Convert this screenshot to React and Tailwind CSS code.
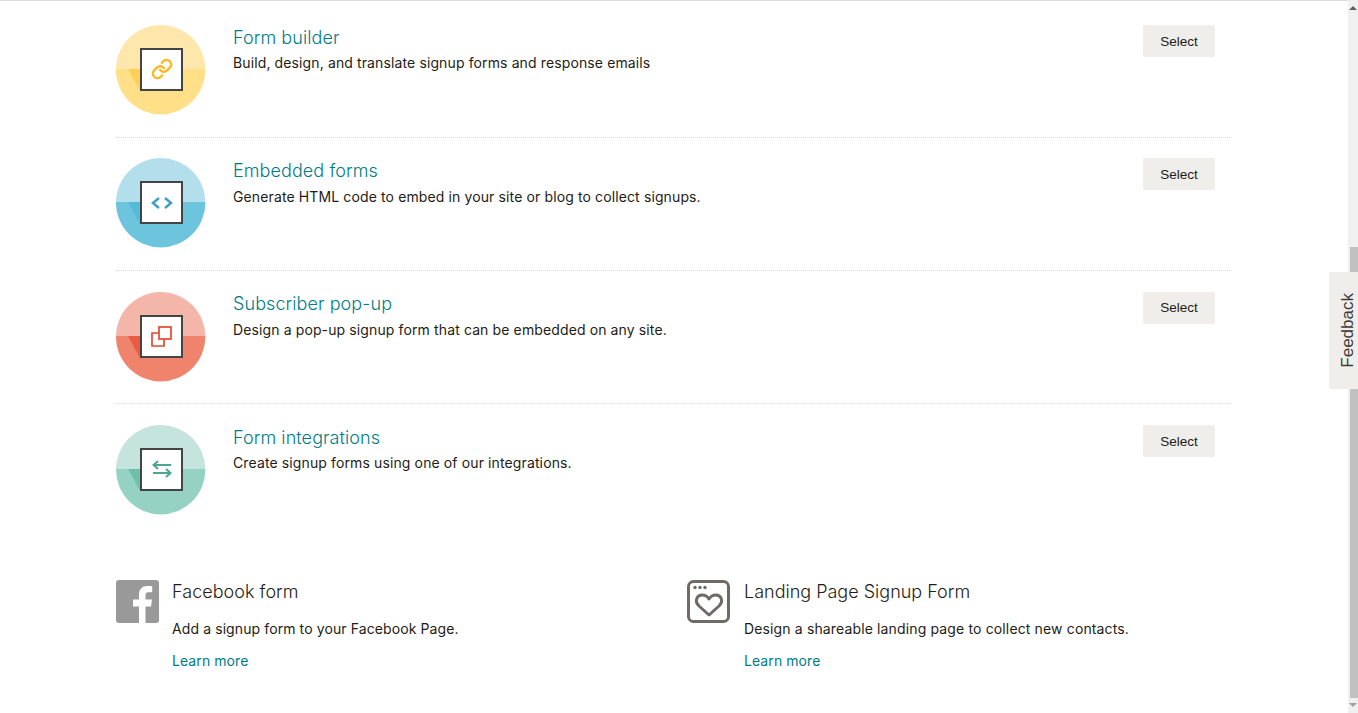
import React from 'react';
import { Link } from 'lucide-react';

const Badge = ({ light, mid, dark, children }) => (
  <div className="relative w-[90px] h-[90px] shrink-0">
    <svg width="90" height="90" viewBox="0 0 90 90" className="block">
      <defs>
        <clipPath id={`c${mid}`}>
          <circle cx="44.7" cy="44.7" r="44.7" />
        </clipPath>
      </defs>
      <g clipPath={`url(#c${mid})`}>
        <rect width="90" height="45" fill={light} />
        <rect y="44" width="90" height="46" fill={mid} />
        <polygon points="12,44 24,44 24,66" fill={dark} />
      </g>
    </svg>
    <div className="absolute left-[24px] top-[23px] w-[43px] h-[43px] bg-white border-2 border-[#444444] flex items-center justify-center">
      {children}
    </div>
  </div>
);

const forms = [
  {
    title: 'Form builder',
    desc: 'Build, design, and translate signup forms and response emails',
    colors: { light: '#ffe6ab', mid: '#ffdf88', dark: '#ffcf56' },
    icon: <Link size={22} strokeWidth={2.6} color="#fbb91f" />,
  },
  {
    title: 'Embedded forms',
    desc: 'Generate HTML code to embed in your site or blog to collect signups.',
    colors: { light: '#b3dfec', mid: '#6dc5dd', dark: '#55bbd6' },
    icon: (
      <svg width="22" height="14" viewBox="0 0 22 14" fill="none" stroke="#3f9fbf" strokeWidth="2.5">
        <path d="M8 2 L2 7 L8 12" />
        <path d="M14 2 L20 7 L14 12" />
      </svg>
    ),
  },
  {
    title: 'Subscriber pop-up',
    desc: 'Design a pop-up signup form that can be embedded on any site.',
    colors: { light: '#f5b6aa', mid: '#f0836c', dark: '#e85c41' },
    icon: (
      <svg width="21" height="21" viewBox="0 0 21 21" fill="none" stroke="#e4492d" strokeWidth="1.7">
        <rect x="8" y="1" width="12" height="12" />
        <path d="M8 7 H1 V20 H13 V13" />
      </svg>
    ),
  },
  {
    title: 'Form integrations',
    desc: 'Create signup forms using one of our integrations.',
    colors: { light: '#c6e4de', mid: '#96d2c4', dark: '#70bfae' },
    icon: (
      <svg width="20" height="18" viewBox="0 0 20 18" fill="none" stroke="#4ea593" strokeWidth="2">
        <path d="M1 5 H19" />
        <path d="M6 1 L1.5 5 L6 9" />
        <path d="M1 13 H19" />
        <path d="M14 9 L18.5 13 L14 17" />
      </svg>
    ),
  },
];

const App = () => {
  return (
    <div className="relative h-[713px] overflow-hidden flex bg-white font-['Inter',sans-serif] text-[#241c15]">
      <main className="flex-1 min-w-0 border-t border-[#dddddd]">
        <div className="ml-[116px] w-[1116px] pt-[3.37px]">
          {forms.map((form, i) => (
            <div
              key={form.title}
              className={`flex pt-[20.63px] pb-[21.7px] ${i < 3 ? 'border-b border-dotted border-[#dcdcdc]' : ''}`}
            >
              <Badge {...form.colors}>{form.icon}</Badge>
              <div className="ml-[27px] flex-1">
                <h3 className="mt-[0.7px] text-[18px] leading-[24px] font-light tracking-[0.08px] text-[#007c89]">{form.title}</h3>
                <p className="mt-[2.7px] text-[14px] leading-[22px] tracking-[0.12px]">{form.desc}</p>
              </div>
              <button className="w-[72px] h-[32px] mr-[17px] pt-[2px] rounded-[2px] bg-[#efeeea] text-[13.5px] font-['Liberation_Sans',sans-serif] text-[#241c15]">
                Select
              </button>
            </div>
          ))}

          <div className="grid grid-cols-2 gap-[26px] mt-[43.3px]">
            <div className="flex gap-[13px]">
              <svg width="43" height="43" viewBox="0 0 43 43" className="shrink-0">
                <rect width="43" height="43" rx="3" fill="#999999" />
                <path
                  d="M29.5 43 V26.5 H35 L36 19.5 H29.5 V15.5 C29.5 13.5 30 12.2 33 12.2 H36.2 V6.2 C35.5 6.1 33.6 6 31.3 6 C26.4 6 23 9 23 14.5 V19.5 H17 V26.5 H23 V43 Z"
                  fill="#ffffff"
                />
              </svg>
              <div>
                <h3 className="text-[18px] leading-[24px] font-light tracking-[0.03px]">Facebook form</h3>
                <p className="mt-[14px] text-[14px] leading-[22px] tracking-[0.1px]">Add a signup form to your Facebook Page.</p>
                <a className="block mt-[10px] text-[14px] leading-[22px] tracking-[0.08px] text-[#007c89]">Learn more</a>
              </div>
            </div>
            <div className="flex gap-[14px]">
              <svg width="43" height="43" viewBox="0 0 43 43" fill="none" className="shrink-0">
                <rect x="1.5" y="1.5" width="40" height="40" rx="5" stroke="#6f6a66" strokeWidth="3" />
                <circle cx="8" cy="7.5" r="1.7" fill="#6f6a66" />
                <circle cx="13" cy="7.5" r="1.7" fill="#6f6a66" />
                <circle cx="18" cy="7.5" r="1.7" fill="#6f6a66" />
                <path
                  d="M22 35 L12 26 C7 21 10 15 15 15 C18 15 20.5 16.5 22 19 C23.5 16.5 26 15 29 15 C34 15 37 21 32 26 Z"
                  stroke="#6f6a66"
                  strokeWidth="3"
                  strokeLinejoin="round"
                />
              </svg>
              <div>
                <h3 className="text-[18px] leading-[24px] font-light">Landing Page Signup Form</h3>
                <p className="mt-[14px] text-[14px] leading-[22px] tracking-[0.14px]">Design a shareable landing page to collect new contacts.</p>
                <a className="block mt-[10px] text-[14px] leading-[22px] tracking-[0.08px] text-[#007c89]">Learn more</a>
              </div>
            </div>
          </div>
        </div>
      </main>

      {/* scrollbar */}
      <div className="w-[10px] shrink-0 bg-[#f0f0f0] flex flex-col items-center">
        <div className="h-[14px] pt-[6px]">
          <div className="w-0 h-0 border-x-[4px] border-x-transparent border-b-[4px] border-b-[#606060]" />
        </div>
        <div className="mt-[233px] h-[451px] w-full pl-[2px]">
          <div className="h-full bg-[#c1c1c1]" />
        </div>
        <div className="mt-[5px] w-0 h-0 border-x-[4px] border-x-transparent border-t-[4px] border-t-[#a0a0a0]" />
      </div>

      <div className="absolute right-0 top-[272px] w-[29px] h-[117px] pl-[8px] bg-[#efeeea] flex items-center justify-center">
        <span className="[writing-mode:vertical-rl] rotate-180 text-[17px] font-['Liberation_Sans',sans-serif] text-[#403b38]">
          Feedback
        </span>
      </div>
    </div>
  );
};

export default App;
